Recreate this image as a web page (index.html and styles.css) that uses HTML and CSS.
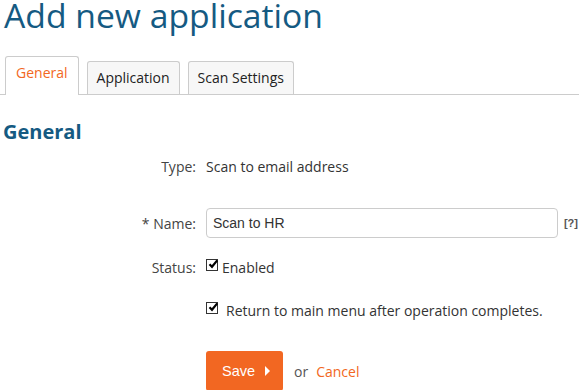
FILE: index.html
```html
<!DOCTYPE html>
<html lang="en">
<head>
    <meta charset="UTF-8">
    <title>Add new application</title>
    <link rel="stylesheet" href="styles.css">
</head>
<body>
    <h1 class="page-title">Add new application</h1>

    <ul class="tabs">
        <li class="tab active">General</li>
        <li class="tab">Application</li>
        <li class="tab">Scan Settings</li>
    </ul>

    <h2 class="section-title">General</h2>

    <form class="app-form">
        <div class="row">
            <span class="label">Type:</span>
            <span class="value">Scan to email address</span>
        </div>

        <div class="row row-name">
            <label class="label" for="appName">* Name:</label>
            <div class="value field">
                <input type="text" id="appName" class="text-input" value="Scan to HR">
                <span class="help">[?]</span>
            </div>
        </div>

        <div class="row">
            <span class="label">Status:</span>
            <label class="value check check-tight">
                <span class="box"><svg viewBox="0 0 12 12" width="12" height="12"><path d="M2.5 6.2 L5 8.8 L10.2 2.4" fill="none" stroke="#000" stroke-width="2.2"/></svg></span>
                Enabled
            </label>
        </div>

        <div class="row">
            <span class="label"></span>
            <label class="value check">
                <span class="box"><svg viewBox="0 0 12 12" width="12" height="12"><path d="M2.5 6.2 L5 8.8 L10.2 2.4" fill="none" stroke="#000" stroke-width="2.2"/></svg></span>
                Return to main menu after operation completes.
            </label>
        </div>

        <div class="row row-actions">
            <span class="label"></span>
            <div class="value actions">
                <button type="button" class="btn-save">Save <span class="arrow"></span></button>
                <span class="or">or</span>
                <a href="#" class="cancel">Cancel</a>
            </div>
        </div>
    </form>
</body>
</html>
```

FILE: styles.css
```css
:root {
    --blue: #155a82;
    --orange: #f26722;
    --text: #333;
}

body {
    margin: 0;
    background: #fff;
    font-family: 'Open Sans', sans-serif;
    color: var(--text);
    overflow: hidden;
}

.page-title {
    margin: 0;
    padding: 0 0 0 4px;
    font-size: 33.7px;
    font-weight: 400;
    line-height: 30px;
    color: var(--blue);
}

.tabs {
    list-style: none;
    margin: 26px 0 0;
    padding: 0 0 0 5px;
    display: flex;
    align-items: flex-end;
    gap: 8px;
    border-bottom: 1px solid #ccc;
}

.tab {
    font-size: 14px;
    color: #222;
    background: #f7f7f7;
    border: 1px solid #ccc;
    border-bottom: none;
    border-radius: 3px 3px 0 0;
    padding: 0 9px;
    height: 32px;
    line-height: 32px;
}

.tab.active {
    background: #fff;
    color: var(--orange);
    height: 38px;
    line-height: 32px;
    padding: 0 10px;
    margin-bottom: -1px;
}

.section-title {
    margin: 24px 0 0 3px;
    font-size: 20px;
    font-weight: 700;
    line-height: 26px;
    color: var(--blue);
}

.app-form {
    margin-top: 8px;
    font-size: 14px;
}

.row {
    display: grid;
    grid-template-columns: 196px 1fr;
    column-gap: 10px;
    align-items: center;
    min-height: 26px;
    margin-bottom: 17px;
}

.row-name {
    margin-top: 29px;
    margin-bottom: 16px;
}

.label {
    text-align: right;
    color: #444;
}

.value {
    color: #333;
}

.field {
    display: flex;
    align-items: center;
    gap: 6px;
    padding-right: 1px;
}

.text-input {
    flex: 1;
    height: 30px;
    box-sizing: border-box;
    border: 1px solid #ccc;
    border-radius: 4px;
    padding: 0 6px;
    font-family: 'Liberation Sans', Arial, sans-serif;
    font-size: 14px;
    color: #333;
}

.help {
    font-family: 'Liberation Sans', Arial, sans-serif;
    font-size: 11px;
    font-weight: 700;
    color: #555;
}

.check {
    display: flex;
    align-items: center;
    gap: 8px;
}

.check-tight {
    gap: 4px;
}

.box {
    width: 12px;
    height: 12px;
    box-sizing: border-box;
    border: 1px solid #333;
    background: #fff;
    display: inline-flex;
    position: relative;
    top: -2px;
}

.box svg {
    position: absolute;
    left: 0;
    top: -2px;
}

.row-actions {
    margin-top: 28px;
}

.actions {
    display: flex;
    align-items: center;
}

.btn-save {
    width: 77px;
    height: 40px;
    border: none;
    border-radius: 3px;
    background: var(--orange);
    color: #fff;
    font-family: 'Liberation Sans', Arial, sans-serif;
    font-size: 14.5px;
    display: inline-flex;
    align-items: center;
    justify-content: center;
    gap: 10px;
    padding: 0 0 0 3px;
}

.arrow {
    width: 0;
    height: 0;
    border-left: 5px solid #fff;
    border-top: 5px solid transparent;
    border-bottom: 5px solid transparent;
}

.or {
    margin-left: 11px;
    color: #555;
}

.cancel {
    margin-left: 8px;
    color: var(--orange);
    text-decoration: none;
}
```
